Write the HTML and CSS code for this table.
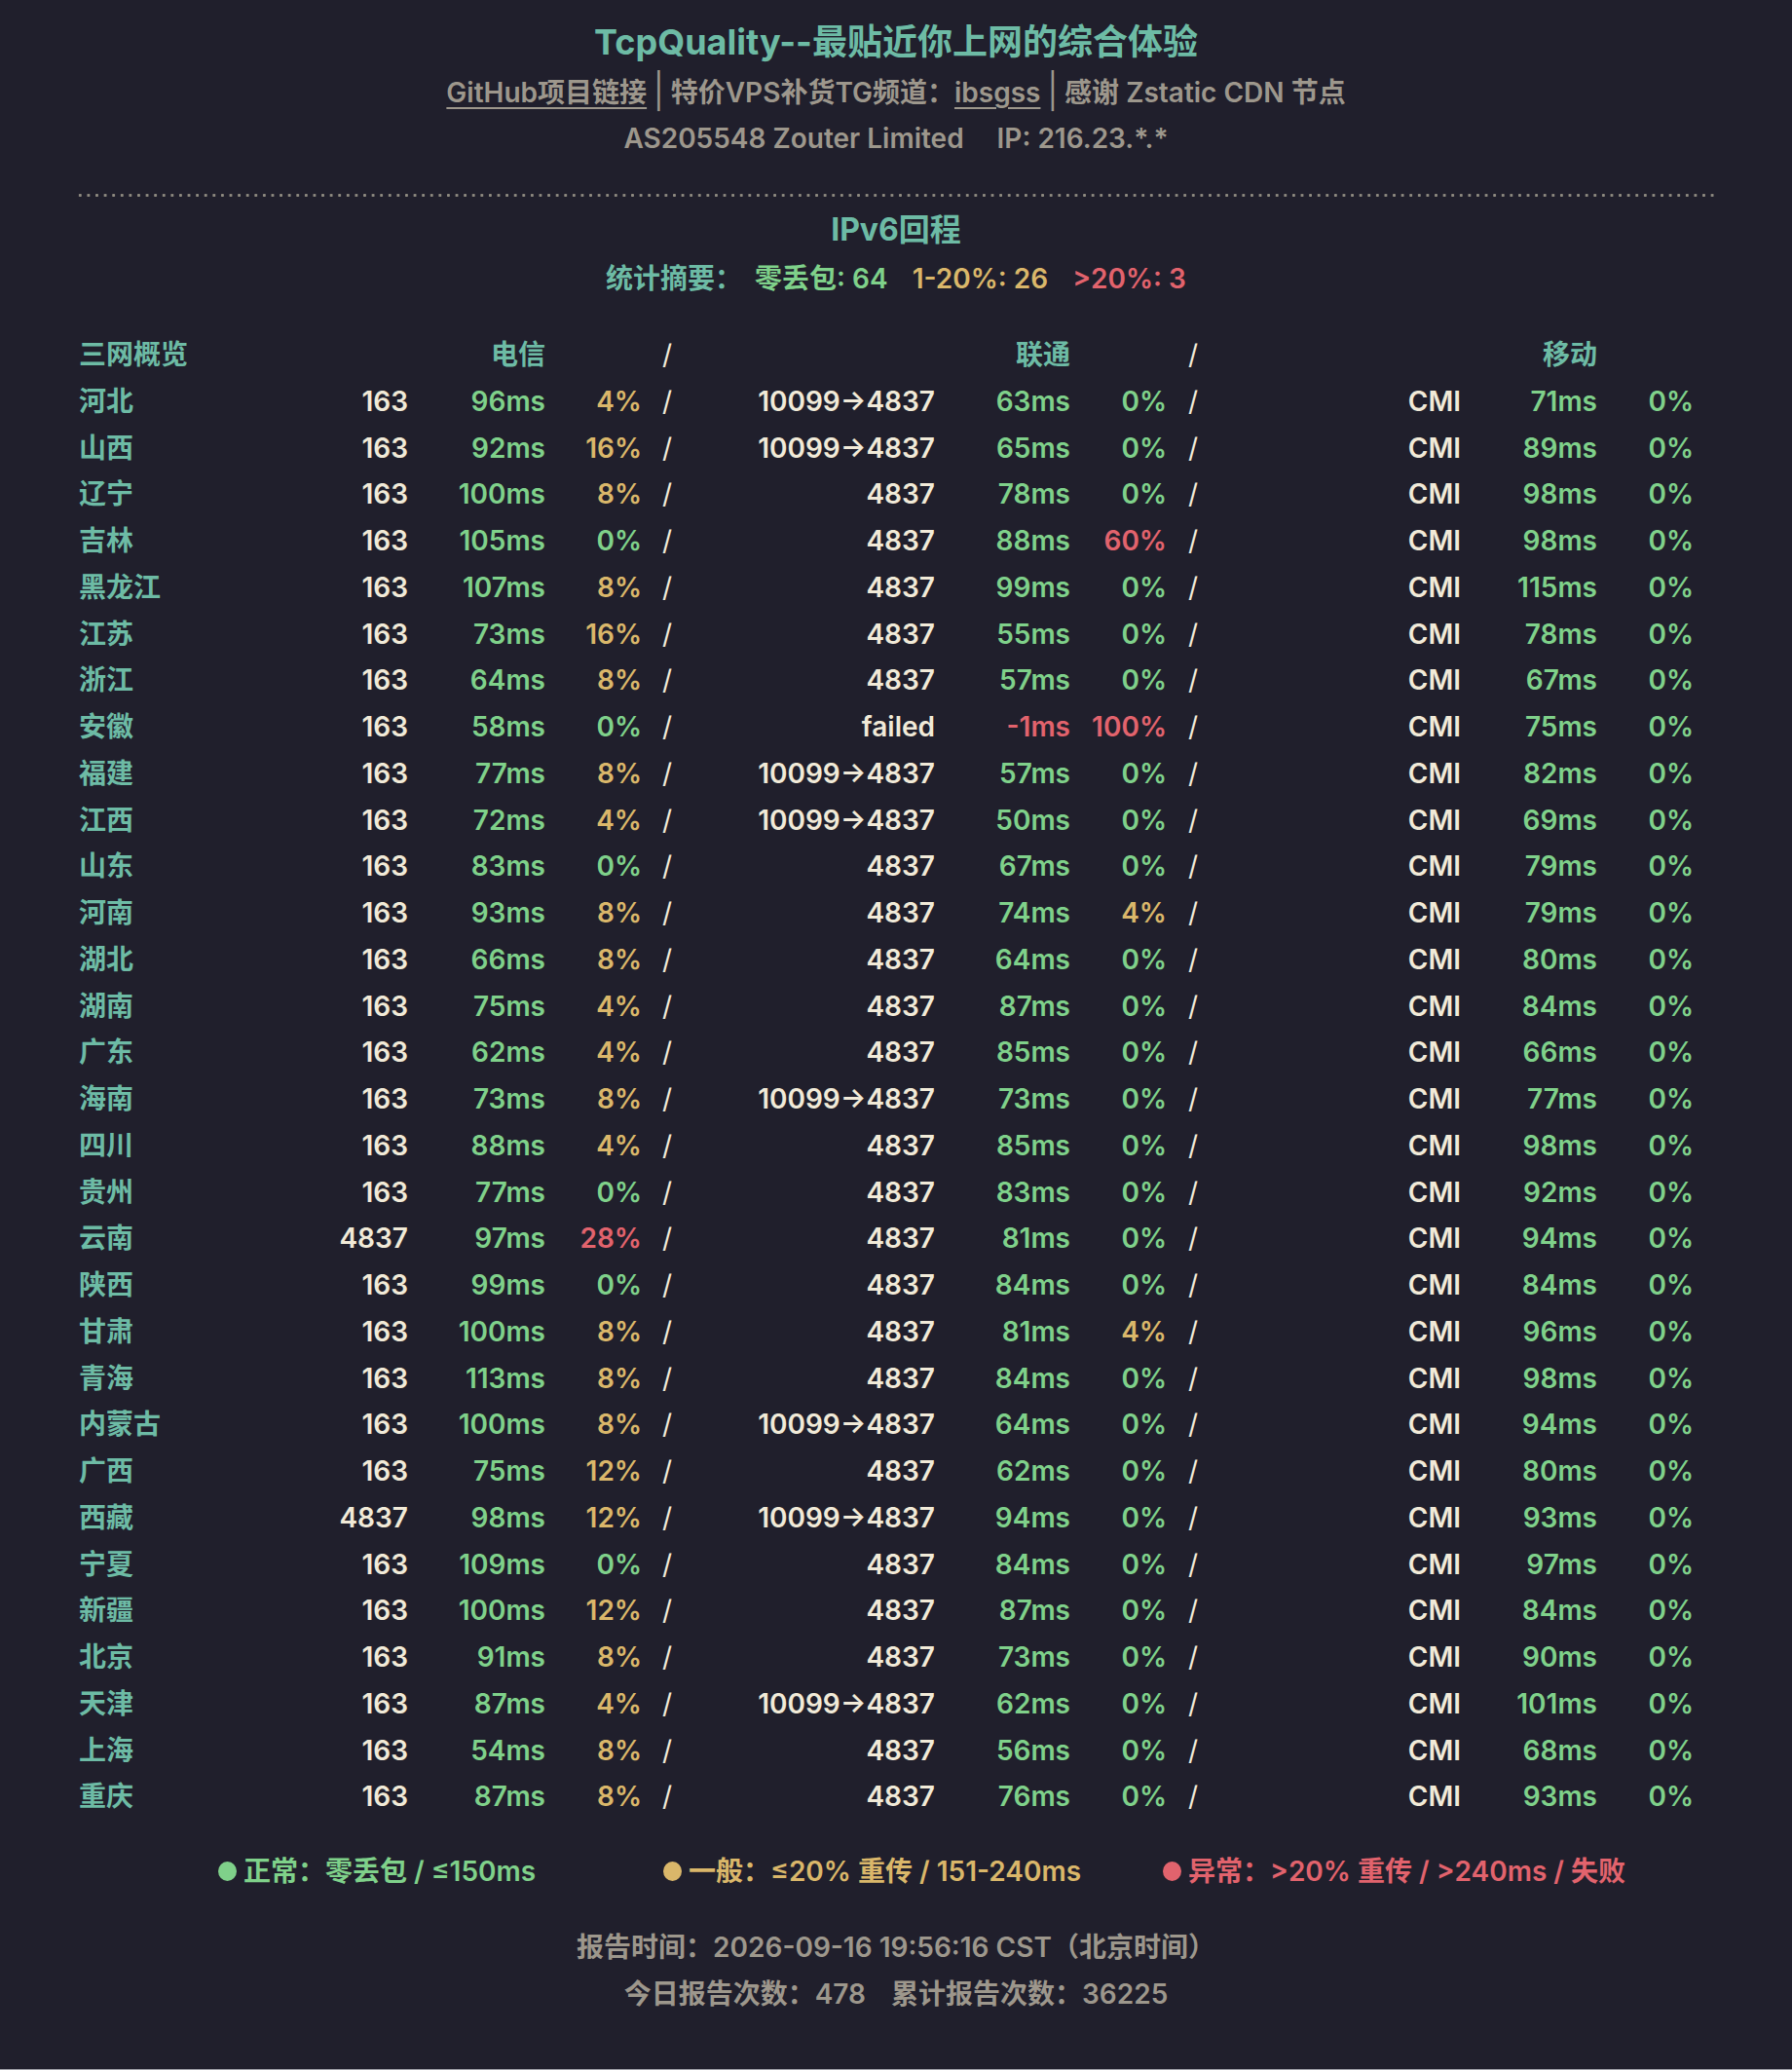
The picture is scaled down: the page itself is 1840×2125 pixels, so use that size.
FILE: index.html
```html
<!DOCTYPE html>
<html lang="zh-CN">
<head>
<meta charset="utf-8">
<title>TcpQuality</title>
<link rel="stylesheet" href="styles.css">
</head>
<body>
<div class="page">
  <header class="head">
    <h1 class="title">TcpQuality--最贴近你上网的综合体验</h1>
    <p class="sub"><a class="lnk" href="#">GitHub项目链接</a><span class="bar">|</span>特价VPS补货TG频道：<a class="lnk" href="#">ibsgss</a><span class="bar">|</span>感谢 Zstatic CDN 节点</p>
    <p class="asline"><span>AS205548 Zouter Limited</span><span class="ip">IP: 216.23.*.*</span></p>
  </header>
  <div class="dots"></div>
  <h2 class="sect">IPv6回程</h2>
  <p class="stats"><span class="lbl">统计摘要：</span><span class="ok">零丢包: 64</span><span class="warn">1-20%: 26</span><span class="bad">&gt;20%: 3</span></p>

  <div class="table">
    <div class="row hdr"><span class="c1">三网概览</span><span></span><span class="r">电信</span><span></span><span class="sl">/</span><span></span><span class="r">联通</span><span></span><span class="sl">/</span><span></span><span class="r">移动</span><span></span></div>
    <div class="row"><span class="c1">河北</span><span class="r w">163</span><span class="r ok">96ms</span><span class="r warn">4%</span><span class="sl">/</span><span class="r w">10099→4837</span><span class="r ok">63ms</span><span class="r ok">0%</span><span class="sl">/</span><span class="r w">CMI</span><span class="r ok">71ms</span><span class="r ok">0%</span></div>
    <div class="row"><span class="c1">山西</span><span class="r w">163</span><span class="r ok">92ms</span><span class="r warn">16%</span><span class="sl">/</span><span class="r w">10099→4837</span><span class="r ok">65ms</span><span class="r ok">0%</span><span class="sl">/</span><span class="r w">CMI</span><span class="r ok">89ms</span><span class="r ok">0%</span></div>
    <div class="row"><span class="c1">辽宁</span><span class="r w">163</span><span class="r ok">100ms</span><span class="r warn">8%</span><span class="sl">/</span><span class="r w">4837</span><span class="r ok">78ms</span><span class="r ok">0%</span><span class="sl">/</span><span class="r w">CMI</span><span class="r ok">98ms</span><span class="r ok">0%</span></div>
    <div class="row"><span class="c1">吉林</span><span class="r w">163</span><span class="r ok">105ms</span><span class="r ok">0%</span><span class="sl">/</span><span class="r w">4837</span><span class="r ok">88ms</span><span class="r bad">60%</span><span class="sl">/</span><span class="r w">CMI</span><span class="r ok">98ms</span><span class="r ok">0%</span></div>
    <div class="row"><span class="c1">黑龙江</span><span class="r w">163</span><span class="r ok">107ms</span><span class="r warn">8%</span><span class="sl">/</span><span class="r w">4837</span><span class="r ok">99ms</span><span class="r ok">0%</span><span class="sl">/</span><span class="r w">CMI</span><span class="r ok">115ms</span><span class="r ok">0%</span></div>
    <div class="row"><span class="c1">江苏</span><span class="r w">163</span><span class="r ok">73ms</span><span class="r warn">16%</span><span class="sl">/</span><span class="r w">4837</span><span class="r ok">55ms</span><span class="r ok">0%</span><span class="sl">/</span><span class="r w">CMI</span><span class="r ok">78ms</span><span class="r ok">0%</span></div>
    <div class="row"><span class="c1">浙江</span><span class="r w">163</span><span class="r ok">64ms</span><span class="r warn">8%</span><span class="sl">/</span><span class="r w">4837</span><span class="r ok">57ms</span><span class="r ok">0%</span><span class="sl">/</span><span class="r w">CMI</span><span class="r ok">67ms</span><span class="r ok">0%</span></div>
    <div class="row"><span class="c1">安徽</span><span class="r w">163</span><span class="r ok">58ms</span><span class="r ok">0%</span><span class="sl">/</span><span class="r w">failed</span><span class="r bad">-1ms</span><span class="r bad">100%</span><span class="sl">/</span><span class="r w">CMI</span><span class="r ok">75ms</span><span class="r ok">0%</span></div>
    <div class="row"><span class="c1">福建</span><span class="r w">163</span><span class="r ok">77ms</span><span class="r warn">8%</span><span class="sl">/</span><span class="r w">10099→4837</span><span class="r ok">57ms</span><span class="r ok">0%</span><span class="sl">/</span><span class="r w">CMI</span><span class="r ok">82ms</span><span class="r ok">0%</span></div>
    <div class="row"><span class="c1">江西</span><span class="r w">163</span><span class="r ok">72ms</span><span class="r warn">4%</span><span class="sl">/</span><span class="r w">10099→4837</span><span class="r ok">50ms</span><span class="r ok">0%</span><span class="sl">/</span><span class="r w">CMI</span><span class="r ok">69ms</span><span class="r ok">0%</span></div>
    <div class="row"><span class="c1">山东</span><span class="r w">163</span><span class="r ok">83ms</span><span class="r ok">0%</span><span class="sl">/</span><span class="r w">4837</span><span class="r ok">67ms</span><span class="r ok">0%</span><span class="sl">/</span><span class="r w">CMI</span><span class="r ok">79ms</span><span class="r ok">0%</span></div>
    <div class="row"><span class="c1">河南</span><span class="r w">163</span><span class="r ok">93ms</span><span class="r warn">8%</span><span class="sl">/</span><span class="r w">4837</span><span class="r ok">74ms</span><span class="r warn">4%</span><span class="sl">/</span><span class="r w">CMI</span><span class="r ok">79ms</span><span class="r ok">0%</span></div>
    <div class="row"><span class="c1">湖北</span><span class="r w">163</span><span class="r ok">66ms</span><span class="r warn">8%</span><span class="sl">/</span><span class="r w">4837</span><span class="r ok">64ms</span><span class="r ok">0%</span><span class="sl">/</span><span class="r w">CMI</span><span class="r ok">80ms</span><span class="r ok">0%</span></div>
    <div class="row"><span class="c1">湖南</span><span class="r w">163</span><span class="r ok">75ms</span><span class="r warn">4%</span><span class="sl">/</span><span class="r w">4837</span><span class="r ok">87ms</span><span class="r ok">0%</span><span class="sl">/</span><span class="r w">CMI</span><span class="r ok">84ms</span><span class="r ok">0%</span></div>
    <div class="row"><span class="c1">广东</span><span class="r w">163</span><span class="r ok">62ms</span><span class="r warn">4%</span><span class="sl">/</span><span class="r w">4837</span><span class="r ok">85ms</span><span class="r ok">0%</span><span class="sl">/</span><span class="r w">CMI</span><span class="r ok">66ms</span><span class="r ok">0%</span></div>
    <div class="row"><span class="c1">海南</span><span class="r w">163</span><span class="r ok">73ms</span><span class="r warn">8%</span><span class="sl">/</span><span class="r w">10099→4837</span><span class="r ok">73ms</span><span class="r ok">0%</span><span class="sl">/</span><span class="r w">CMI</span><span class="r ok">77ms</span><span class="r ok">0%</span></div>
    <div class="row"><span class="c1">四川</span><span class="r w">163</span><span class="r ok">88ms</span><span class="r warn">4%</span><span class="sl">/</span><span class="r w">4837</span><span class="r ok">85ms</span><span class="r ok">0%</span><span class="sl">/</span><span class="r w">CMI</span><span class="r ok">98ms</span><span class="r ok">0%</span></div>
    <div class="row"><span class="c1">贵州</span><span class="r w">163</span><span class="r ok">77ms</span><span class="r ok">0%</span><span class="sl">/</span><span class="r w">4837</span><span class="r ok">83ms</span><span class="r ok">0%</span><span class="sl">/</span><span class="r w">CMI</span><span class="r ok">92ms</span><span class="r ok">0%</span></div>
    <div class="row"><span class="c1">云南</span><span class="r w">4837</span><span class="r ok">97ms</span><span class="r bad">28%</span><span class="sl">/</span><span class="r w">4837</span><span class="r ok">81ms</span><span class="r ok">0%</span><span class="sl">/</span><span class="r w">CMI</span><span class="r ok">94ms</span><span class="r ok">0%</span></div>
    <div class="row"><span class="c1">陕西</span><span class="r w">163</span><span class="r ok">99ms</span><span class="r ok">0%</span><span class="sl">/</span><span class="r w">4837</span><span class="r ok">84ms</span><span class="r ok">0%</span><span class="sl">/</span><span class="r w">CMI</span><span class="r ok">84ms</span><span class="r ok">0%</span></div>
    <div class="row"><span class="c1">甘肃</span><span class="r w">163</span><span class="r ok">100ms</span><span class="r warn">8%</span><span class="sl">/</span><span class="r w">4837</span><span class="r ok">81ms</span><span class="r warn">4%</span><span class="sl">/</span><span class="r w">CMI</span><span class="r ok">96ms</span><span class="r ok">0%</span></div>
    <div class="row"><span class="c1">青海</span><span class="r w">163</span><span class="r ok">113ms</span><span class="r warn">8%</span><span class="sl">/</span><span class="r w">4837</span><span class="r ok">84ms</span><span class="r ok">0%</span><span class="sl">/</span><span class="r w">CMI</span><span class="r ok">98ms</span><span class="r ok">0%</span></div>
    <div class="row"><span class="c1">内蒙古</span><span class="r w">163</span><span class="r ok">100ms</span><span class="r warn">8%</span><span class="sl">/</span><span class="r w">10099→4837</span><span class="r ok">64ms</span><span class="r ok">0%</span><span class="sl">/</span><span class="r w">CMI</span><span class="r ok">94ms</span><span class="r ok">0%</span></div>
    <div class="row"><span class="c1">广西</span><span class="r w">163</span><span class="r ok">75ms</span><span class="r warn">12%</span><span class="sl">/</span><span class="r w">4837</span><span class="r ok">62ms</span><span class="r ok">0%</span><span class="sl">/</span><span class="r w">CMI</span><span class="r ok">80ms</span><span class="r ok">0%</span></div>
    <div class="row"><span class="c1">西藏</span><span class="r w">4837</span><span class="r ok">98ms</span><span class="r warn">12%</span><span class="sl">/</span><span class="r w">10099→4837</span><span class="r ok">94ms</span><span class="r ok">0%</span><span class="sl">/</span><span class="r w">CMI</span><span class="r ok">93ms</span><span class="r ok">0%</span></div>
    <div class="row"><span class="c1">宁夏</span><span class="r w">163</span><span class="r ok">109ms</span><span class="r ok">0%</span><span class="sl">/</span><span class="r w">4837</span><span class="r ok">84ms</span><span class="r ok">0%</span><span class="sl">/</span><span class="r w">CMI</span><span class="r ok">97ms</span><span class="r ok">0%</span></div>
    <div class="row"><span class="c1">新疆</span><span class="r w">163</span><span class="r ok">100ms</span><span class="r warn">12%</span><span class="sl">/</span><span class="r w">4837</span><span class="r ok">87ms</span><span class="r ok">0%</span><span class="sl">/</span><span class="r w">CMI</span><span class="r ok">84ms</span><span class="r ok">0%</span></div>
    <div class="row"><span class="c1">北京</span><span class="r w">163</span><span class="r ok">91ms</span><span class="r warn">8%</span><span class="sl">/</span><span class="r w">4837</span><span class="r ok">73ms</span><span class="r ok">0%</span><span class="sl">/</span><span class="r w">CMI</span><span class="r ok">90ms</span><span class="r ok">0%</span></div>
    <div class="row"><span class="c1">天津</span><span class="r w">163</span><span class="r ok">87ms</span><span class="r warn">4%</span><span class="sl">/</span><span class="r w">10099→4837</span><span class="r ok">62ms</span><span class="r ok">0%</span><span class="sl">/</span><span class="r w">CMI</span><span class="r ok">101ms</span><span class="r ok">0%</span></div>
    <div class="row"><span class="c1">上海</span><span class="r w">163</span><span class="r ok">54ms</span><span class="r warn">8%</span><span class="sl">/</span><span class="r w">4837</span><span class="r ok">56ms</span><span class="r ok">0%</span><span class="sl">/</span><span class="r w">CMI</span><span class="r ok">68ms</span><span class="r ok">0%</span></div>
    <div class="row"><span class="c1">重庆</span><span class="r w">163</span><span class="r ok">87ms</span><span class="r warn">8%</span><span class="sl">/</span><span class="r w">4837</span><span class="r ok">76ms</span><span class="r ok">0%</span><span class="sl">/</span><span class="r w">CMI</span><span class="r ok">93ms</span><span class="r ok">0%</span></div>
  </div>

  <div class="legend">
    <span class="item ok g1"><i class="dot"></i>正常：零丢包 / ≤150ms</span>
    <span class="item warn g2"><i class="dot"></i>一般：≤20% 重传 / 151-240ms</span>
    <span class="item bad"><i class="dot"></i>异常：&gt;20% 重传 / &gt;240ms / 失败</span>
  </div>

  <footer class="foot">
    <p>报告时间：2026-09-16 19:56:16 CST（北京时间）</p>
    <p>今日报告次数：478<span class="sp"></span>累计报告次数：36225</p>
  </footer>
</div>
</body>
</html>
```

FILE: styles.css
```css
html {
  margin: 0;
  padding: 0;
  background: #201f2c;
}

body {
  margin: 0;
  padding: 0;
  height: 2124px;
  border-bottom: 1px solid #9fa0a8;
  background: #201f2c;
  font-family: "Inter", "Noto Sans CJK SC", sans-serif;
  font-weight: 600;
  color: #f1ead8;
  overflow: hidden;
}

.page {
  width: 1684px;
  margin: 0 auto;
  padding-top: 18px;
}

.head {
  text-align: center;
  color: #9d978c;
}

.title {
  margin: 0;
  font-size: 36px;
  line-height: 50px;
  font-weight: 700;
  color: #6dbba5;
}

.sub {
  margin: 0;
  font-size: 28px;
  line-height: 52px;
}

.lnk {
  color: #9d978c;
  text-decoration: underline;
  text-underline-offset: 5px;
  text-decoration-thickness: 2px;
}

.bar {
  display: inline-block;
  margin: 0 7px;
  font-weight: 400;
  font-size: 32px;
  transform: scaleY(1.1);
}

.asline {
  margin: 0;
  font-size: 28px;
  line-height: 42px;
}

.ip { margin-left: 34px; }

.dots {
  margin-top: 36px;
  height: 3px;
  background-image: radial-gradient(circle, #8e8a80 1.3px, transparent 1.7px);
  background-size: 8.6px 3px;
  background-repeat: repeat-x;
}

.sect {
  margin: 12px 0 0;
  text-align: center;
  font-size: 32px;
  line-height: 44px;
  font-weight: 700;
  color: #6dbba5;
}

.stats {
  margin: 0;
  text-align: center;
  font-size: 28px;
  line-height: 56px;
}

.stats .lbl { color: #6dbba5; margin-right: 13px; }
.stats .ok, .stats .warn { margin-right: 25px; }

.table {
  margin-top: 27px;
}

.row {
  display: grid;
  grid-template-columns: 222px 119px 141px 99px 52px 249px 139px 99px 54px 248px 140px 99px;
  font-size: 28px;
  line-height: 47.75px;
  height: 47.75px;
  white-space: nowrap;
}

.c1 { color: #6dbba5; padding-left: 3px; }
.hdr { color: #6dbba5; }
.r { text-align: right; }
.sl { text-align: center; color: #f1ead8; font-weight: 400; }
.w { color: #f1ead8; }

.ok { color: #7fd18a; }
.warn { color: #dab76a; }
.bad { color: #e2636d; }

.legend {
  margin-top: 32px;
  display: flex;
  align-items: center;
  padding-left: 146px;
  font-size: 28px;
  line-height: 40px;
}

.item {
  display: inline-flex;
  align-items: center;
}

.g1 { margin-right: 131px; }
.g2 { margin-right: 84px; }

.dot {
  display: inline-block;
  width: 19px;
  height: 20px;
  border-radius: 50%;
  background: currentColor;
  margin-right: 7px;
}

.foot {
  margin-top: 34px;
  text-align: center;
  color: #9d978c;
  font-size: 28px;
}

.foot p {
  margin: 0;
  line-height: 48px;
}

.sp { display: inline-block; width: 26px; }
```
